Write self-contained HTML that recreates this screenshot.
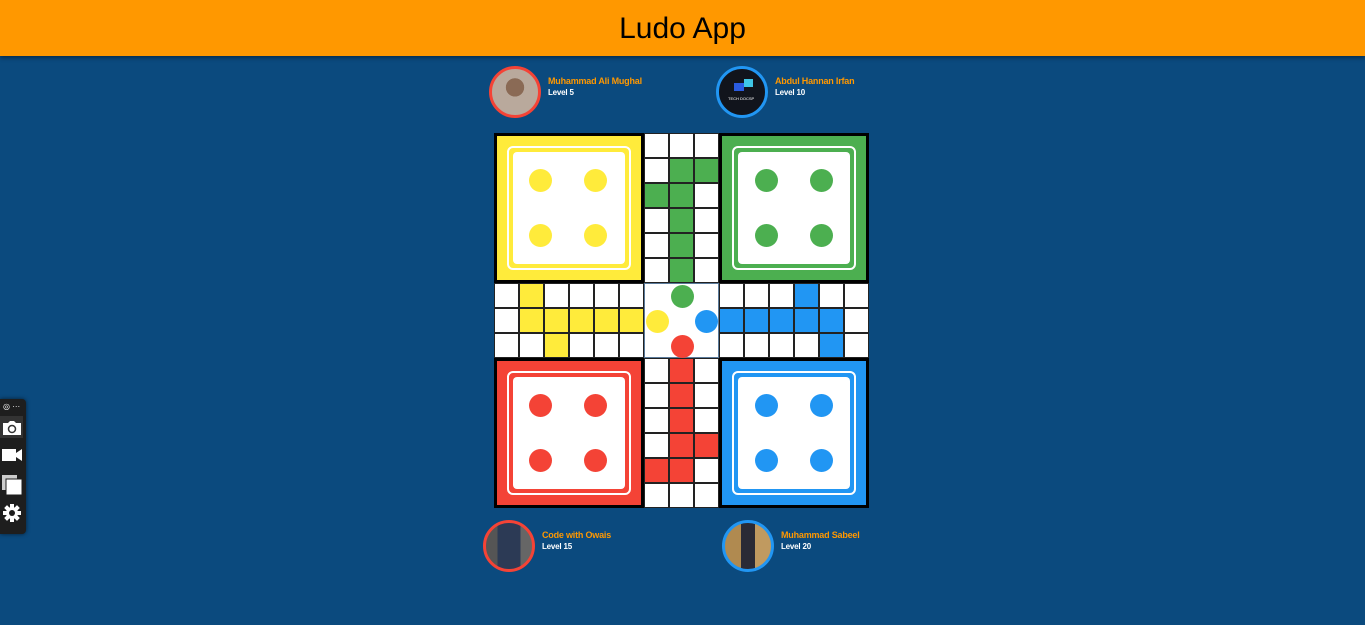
<!DOCTYPE html>
<html><head><meta charset="utf-8"><style>
*{margin:0;padding:0;box-sizing:border-box}
body{width:1365px;height:625px;background:#0b4a7e;font-family:"Liberation Sans",sans-serif;position:relative;overflow:hidden}
.hdr{position:absolute;left:0;top:0;width:1365px;height:56px;background:#ff9800;text-align:center;line-height:58px;font-size:30px;color:#000;box-shadow:0 2px 4px rgba(0,0,0,.4)}
.p{position:absolute;display:flex;align-items:flex-start}
.av{width:52px;height:52px;border-radius:50%;border:3px solid;overflow:hidden;background:#777}
.nm{margin-left:7px;margin-top:10px;font-size:9px;font-weight:bold;color:#ff9800;line-height:11px;letter-spacing:-0.2px}
.nm span{display:block;color:#fff;font-size:8px}
.home{position:absolute;width:150px;height:150px;border:3px solid #000}
.home .r1{position:absolute;left:10px;top:10px;right:10px;bottom:10px;border:2px solid #fff;border-radius:6px}
.home .r2{position:absolute;left:16px;top:16px;right:16px;bottom:16px;background:#fff;border-radius:4px}
.dot{position:absolute;width:23px;height:23px;border-radius:50%}
.g{position:absolute;display:grid;background:#000;gap:0}
.g div{width:25px;height:25px;border:1.5px solid #222;background:#fff}
.Y{background:#ffeb3b!important}.G{background:#4caf50!important}.B{background:#2196f3!important}.R{background:#f44336!important}
</style></head><body>
<div class="hdr">Ludo App</div>

<div class="p" style="left:489px;top:66px"><div class="av" style="border-color:#f44336;background:radial-gradient(circle at 50% 40%,#8a6a55 0 25%,#b9a99c 26% 100%)"></div><div class="nm">Muhammad Ali Mughal<span>Level 5</span></div></div>
<div class="p" style="left:716px;top:66px"><div class="av" style="border-color:#2196f3;background:#11141c;position:relative"><div style="position:absolute;left:15px;top:14px;width:10px;height:8px;background:#2a5be0"></div><div style="position:absolute;left:25px;top:10px;width:9px;height:8px;background:#3fc6e6"></div><div style="position:absolute;left:9px;top:27px;font-size:4px;color:#fff">TECH DOCSP</div></div><div class="nm">Abdul Hannan Irfan<span>Level 10</span></div></div>
<div class="p" style="left:483px;top:520px"><div class="av" style="border-color:#f44336;background:linear-gradient(90deg,#555 0 25%,#2c3a55 25% 75%,#666 75%)"></div><div class="nm">Code with Owais<span>Level 15</span></div></div>
<div class="p" style="left:722px;top:520px"><div class="av" style="border-color:#2196f3;background:linear-gradient(90deg,#b08a50 0 35%,#2a2a35 35% 65%,#c09a60 65%)"></div><div class="nm">Muhammad Sabeel<span>Level 20</span></div></div>

<div class="home" style="left:494px;top:133px;background:#ffeb3b"><div class="r1"></div><div class="r2"></div>
<div class="dot" style="background:#ffeb3b;left:32px;top:33px"></div><div class="dot" style="background:#ffeb3b;left:87px;top:33px"></div><div class="dot" style="background:#ffeb3b;left:32px;top:88px"></div><div class="dot" style="background:#ffeb3b;left:87px;top:88px"></div></div>
<div class="home" style="left:719px;top:133px;background:#4caf50"><div class="r1"></div><div class="r2"></div>
<div class="dot" style="background:#4caf50;left:33px;top:33px"></div><div class="dot" style="background:#4caf50;left:88px;top:33px"></div><div class="dot" style="background:#4caf50;left:33px;top:88px"></div><div class="dot" style="background:#4caf50;left:88px;top:88px"></div></div>
<div class="home" style="left:494px;top:358px;background:#f44336"><div class="r1"></div><div class="r2"></div>
<div class="dot" style="background:#f44336;left:32px;top:33px"></div><div class="dot" style="background:#f44336;left:87px;top:33px"></div><div class="dot" style="background:#f44336;left:32px;top:88px"></div><div class="dot" style="background:#f44336;left:87px;top:88px"></div></div>
<div class="home" style="left:719px;top:358px;background:#2196f3"><div class="r1"></div><div class="r2"></div>
<div class="dot" style="background:#2196f3;left:33px;top:33px"></div><div class="dot" style="background:#2196f3;left:88px;top:33px"></div><div class="dot" style="background:#2196f3;left:33px;top:88px"></div><div class="dot" style="background:#2196f3;left:88px;top:88px"></div></div>

<div class="g" style="left:644px;top:133px;grid-template-columns:repeat(3,25px)">
<div></div><div></div><div></div><div></div><div class="G"></div><div class="G"></div><div class="G"></div><div class="G"></div><div></div><div></div><div class="G"></div><div></div><div></div><div class="G"></div><div></div><div></div><div class="G"></div><div></div></div>
<div class="g" style="left:494px;top:283px;grid-template-columns:repeat(6,25px)">
<div></div><div class="Y"></div><div></div><div></div><div></div><div></div><div></div><div class="Y"></div><div class="Y"></div><div class="Y"></div><div class="Y"></div><div class="Y"></div><div></div><div></div><div class="Y"></div><div></div><div></div><div></div></div>
<div class="g" style="left:719px;top:283px;grid-template-columns:repeat(6,25px)">
<div></div><div></div><div></div><div class="B"></div><div></div><div></div><div class="B"></div><div class="B"></div><div class="B"></div><div class="B"></div><div class="B"></div><div></div><div></div><div></div><div></div><div></div><div class="B"></div><div></div></div>
<div class="g" style="left:644px;top:358px;grid-template-columns:repeat(3,25px)">
<div></div><div class="R"></div><div></div><div></div><div class="R"></div><div></div><div></div><div class="R"></div><div></div><div></div><div class="R"></div><div class="R"></div><div class="R"></div><div class="R"></div><div></div><div></div><div></div><div></div></div>

<div style="position:absolute;left:644px;top:283px;width:75px;height:75px;background:#fff;border:1px solid #5a7a9a">
<div class="dot" style="background:#4caf50;left:26px;top:1px"></div>
<div class="dot" style="background:#ffeb3b;left:1px;top:26px"></div>
<div class="dot" style="background:#2196f3;left:50px;top:26px"></div>
<div class="dot" style="background:#f44336;left:26px;top:51px"></div></div>

<div style="position:absolute;left:0;top:399px;width:26px;height:135px;background:#1e1e1e;border-radius:0 4px 4px 0;box-shadow:0 0 4px rgba(0,0,0,.6);color:#fff">
<div style="position:absolute;left:3px;top:3px;font-size:8px">◎ ···</div>
<div style="position:absolute;left:0;top:17px;width:23px;height:22px;background:#333"></div>
<svg style="position:absolute;left:2px;top:21px" width="20" height="16" viewBox="0 0 20 16"><path d="M1 3h5l2-2h4l2 2h5v12H1z" fill="#fff"/><circle cx="10" cy="9" r="3.5" fill="none" stroke="#333" stroke-width="1.5"/></svg>
<svg style="position:absolute;left:2px;top:49px" width="20" height="14" viewBox="0 0 20 14"><rect x="0" y="1" width="14" height="12" fill="#fff"/><path d="M14 5l6-4v12l-6-4z" fill="#fff"/></svg>
<svg style="position:absolute;left:2px;top:76px" width="20" height="20" viewBox="0 0 20 20"><rect x="0" y="0" width="15" height="15" fill="#ccc"/><rect x="4" y="4" width="16" height="16" fill="#fff" stroke="#1e1e1e"/></svg>
<svg style="position:absolute;left:2px;top:104px" width="20" height="20" viewBox="0 0 20 20"><circle cx="10" cy="10" r="6" fill="#fff"/><g stroke="#fff" stroke-width="4"><path d="M10 1v18M1 10h18M3.6 3.6l12.8 12.8M16.4 3.6L3.6 16.4"/></g><circle cx="10" cy="10" r="3" fill="#1e1e1e"/></svg>
</div>
</body></html>
